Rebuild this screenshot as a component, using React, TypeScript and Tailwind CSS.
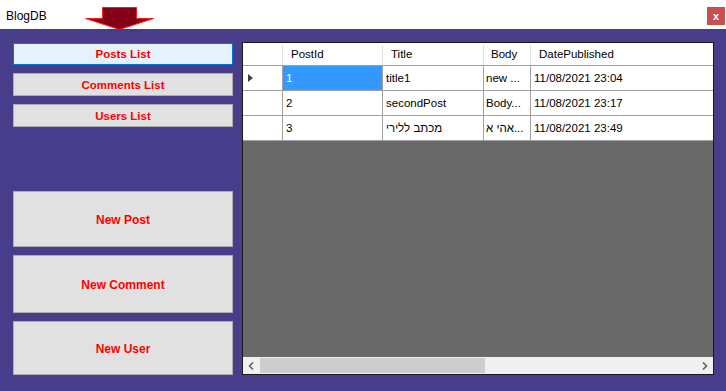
const font = "font-['Liberation_Sans',Arial,sans-serif]";

interface NavButtonProps {
  label: string;
  focused?: boolean;
  className?: string;
}

function NavButton({ label, focused, className = "" }: NavButtonProps) {
  return (
    <button
      className={`w-[220px] flex items-center justify-center border pt-[2px] text-[11.5px] font-bold text-[#ff0000] ${
        focused ? "border-[#0078d7] bg-[#e5f1fb]" : "border-[#adadad] bg-[#e1e1e1]"
      } ${className}`}
    >
      {label}
    </button>
  );
}

const rows = [
  { id: "1", title: "title1", body: "new ...", date: "11/08/2021 23:04", current: true },
  { id: "2", title: "secondPost", body: "Body...", date: "11/08/2021 23:17" },
  { id: "3", title: "מכתב ללירי", body: "אהי א...", date: "11/08/2021 23:49" },
];

function PostsGrid() {
  return (
    <div className="w-[472px] h-[333px] mt-[13px] border border-[#1a1a1a] flex flex-col bg-[#696969] text-[11.5px] text-black">
      <div className="flex h-[23px] pt-[2px] bg-white border-b border-[#a0a0a0]">
        <div className="w-[40px] border-r border-[#e0e0e0]" />
        <div className="w-[100px] pl-[8px] flex items-center border-r border-[#e0e0e0]">PostId</div>
        <div className="w-[101px] pl-[8px] flex items-center border-r border-[#e0e0e0]">Title</div>
        <div className="w-[47px] pl-[7px] flex items-center border-r border-[#e0e0e0]">Body</div>
        <div className="flex-1 pl-[8px] flex items-center">DatePublished</div>
      </div>
      {rows.map((r) => (
        <div key={r.id} className="flex h-[25px] bg-white border-b border-[#a0a0a0]">
          <div className="w-[40px] border-r border-[#a0a0a0] flex items-center pl-[5px]">
            {r.current && (
              <svg width="6" height="8" viewBox="0 0 6 8">
                <path d="M0 0 L5 4 L0 8 Z" fill="#404040" />
              </svg>
            )}
          </div>
          <div
            className={`w-[100px] pl-[3px] pt-[2px] flex items-center border-r border-[#a0a0a0] ${
              r.current ? "bg-[#3399ff] text-white" : ""
            }`}
          >
            {r.id}
          </div>
          <div className="w-[101px] pl-[3px] pt-[2px] flex items-center border-r border-[#a0a0a0] overflow-hidden whitespace-nowrap">
            {r.title}
          </div>
          <div className="w-[47px] pl-[2px] pt-[2px] flex items-center border-r border-[#a0a0a0] overflow-hidden whitespace-nowrap">
            {r.body}
          </div>
          <div className="flex-1 pl-[3px] pt-[2px] flex items-center">{r.date}</div>
        </div>
      ))}
      <div className="flex-1" />
      <div className="h-[17px] flex bg-[#f0f0f0]">
        <div className="w-[17px] flex items-center justify-center">
          <svg width="7" height="8" viewBox="0 0 7 8">
            <path d="M5 0.5 L1.5 4 L5 7.5" stroke="#606060" strokeWidth="1.6" fill="none" />
          </svg>
        </div>
        <div className="w-[225px] my-[1px] bg-[#cdcdcd]" />
        <div className="flex-1" />
        <div className="w-[17px] flex items-center justify-center">
          <svg width="7" height="8" viewBox="0 0 7 8">
            <path d="M2 0.5 L5.5 4 L2 7.5" stroke="#606060" strokeWidth="1.6" fill="none" />
          </svg>
        </div>
      </div>
    </div>
  );
}

export default function App() {
  return (
    <div className={`w-[726px] h-[391px] flex flex-col ${font} overflow-hidden`}>
      <div className="h-[29px] bg-white flex items-start shrink-0">
        <span className="ml-[6px] mt-[7px] text-[12px] text-black">BlogDB</span>
        <svg className="ml-[38px] mt-[7px]" width="70" height="23" viewBox="0 0 70 23">
          <polygon
            points="17.5,0.5 51.5,0.5 51.5,11.5 68.5,11.5 34.5,22.5 0.5,11.5 17.5,11.5"
            fill="#850019"
            stroke="#ff1a1a"
            strokeWidth="1"
          />
        </svg>
        <div className="flex-1" />
        <div className="mt-[7px] mr-[1px] w-[18px] h-[18px] bg-[#c75050] flex items-center justify-center text-white text-[11px] font-bold leading-none">
          x
        </div>
      </div>
      <div className="flex-1 bg-[#483d8b] flex">
        <div className="ml-[13px] w-[220px] flex flex-col">
          <NavButton label="Posts List" focused className="mt-[14px] h-[22px]" />
          <NavButton label="Comments List" className="mt-[8px] h-[23px]" />
          <NavButton label="Users List" className="mt-[8px] h-[23px]" />
          <NavButton label="New Post" className="mt-[64px] h-[56px] !text-[12px]" />
          <NavButton label="New Comment" className="mt-[8px] h-[58px] !text-[12px]" />
          <NavButton label="New User" className="mt-[8px] h-[54px] !text-[12px]" />
        </div>
        <div className="ml-[9px]">
          <PostsGrid />
        </div>
      </div>
    </div>
  );
}
